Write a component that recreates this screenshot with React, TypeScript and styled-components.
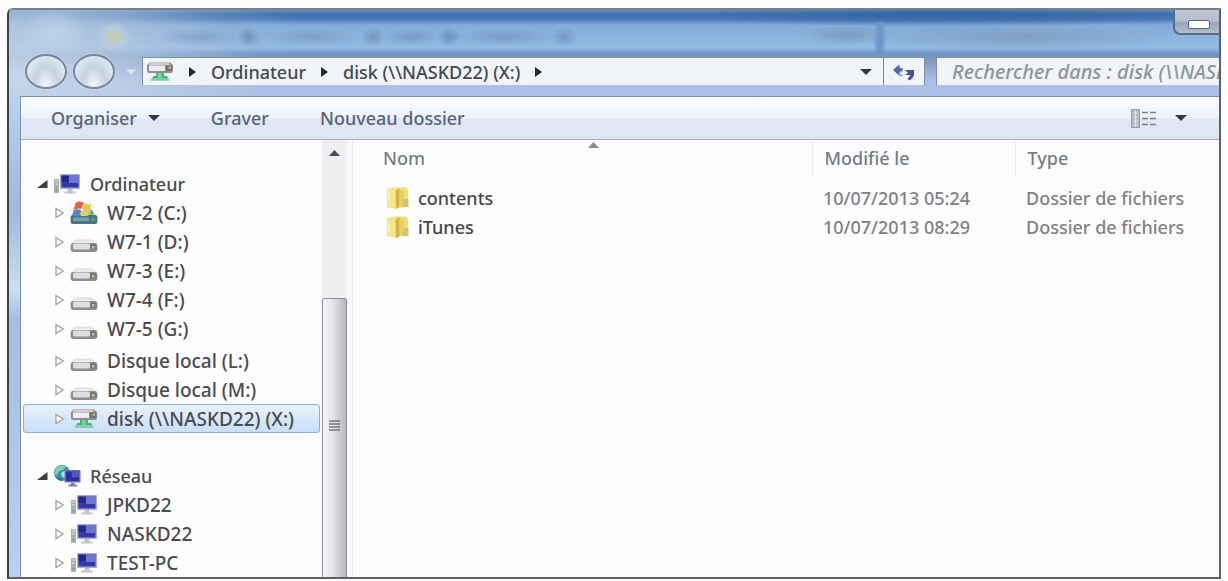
import React from "react";
import styled, { createGlobalStyle, css } from "styled-components";

const GlobalStyle = createGlobalStyle`
  * { box-sizing: border-box; }
  body {
    margin: 0;
    background: #fdfdfd;
    color: #4a4a50;
    font: 500 18px/28px "Noto Sans", "Open Sans", sans-serif;
  }
  button, input { font: inherit; color: inherit; }
`;

const Page = styled.div`
  display: flex;
  min-height: 100vh;
  padding: 8px 7px 2px;
`;

const Window = styled.div`
  flex: 1;
  min-width: 0;
  display: flex;
  flex-direction: column;
  overflow: hidden;
  border: 2px solid #5d6167;
  border-top-color: #74808e;
  border-left-color: #3d434e;
  border-top-left-radius: 6px;
  background: linear-gradient(#a5c1e2 0, #b7d2ec 90px, #9fb9da 200px, #c9dff0 280px, #a3bfe2 310px, #b6d2ee 100%);
`;

const Glass = styled.header`
  display: flex;
  flex-direction: column;
  background:
    radial-gradient(ellipse 18px 16px at 105px 27px, #c3cf9f 0, #b7cbe0 60%, transparent),
    radial-gradient(ellipse 34px 24px at 45px 22px, #bdd2ea 0, transparent),
    radial-gradient(ellipse 44px 9px at 190px 27px, #84a4ca 0, transparent),
    radial-gradient(ellipse 12px 10px at 240px 27px, #7291ba 0, transparent),
    radial-gradient(ellipse 50px 9px at 305px 27px, #7f9fc8 0, transparent),
    radial-gradient(ellipse 12px 10px at 364px 27px, #7693bd 0, transparent),
    radial-gradient(ellipse 30px 9px at 402px 27px, #799bc7 0, transparent),
    radial-gradient(ellipse 12px 10px at 440px 27px, #6e90c0 0, transparent),
    radial-gradient(ellipse 52px 9px at 496px 27px, #7b9cc8 0, transparent),
    radial-gradient(ellipse 14px 10px at 555px 27px, #7596c2 0, transparent),
    radial-gradient(ellipse 46px 10px at 838px 25px, #7c9cc0 0, transparent),
    linear-gradient(90deg, transparent 864px, #6c96c8 869px, #6c96c8 872px, transparent 878px) 0 12px / 100% 34px no-repeat,
    radial-gradient(ellipse 150px 14px at 1010px 27px, #809fc2 0, transparent),
    radial-gradient(ellipse 260px 12px at 940px 5px, #3564a4 0, transparent),
    radial-gradient(ellipse 260px 100px at 0 70px, #c6d6ea 0, transparent),
    radial-gradient(ellipse 300px 60px at 0 20px, #9bb5d5 0, transparent),
    linear-gradient(#6b8fbd 0, #3f6fac 4px, #4a79b5 9px, #83acd9 15px, #94bbe4 38px, #6f94c4 44px, #7f96ba 48px, #a9c0e4 70px, #adbfe7 100%);
`;

const TitleBar = styled.div`
  display: flex;
  justify-content: flex-end;
  align-items: flex-start;
  height: 44px;
`;

const MinimizeButton = styled.button`
  display: flex;
  align-items: center;
  justify-content: center;
  width: 46px;
  height: 25px;
  padding: 6px 0 0 4px;
  border: 2px solid #5b6b85;
  border-width: 0 0 2px 2px;
  border-bottom-left-radius: 7px;
  background: linear-gradient(#c3c9d3, #b4bccb 50%, #98a5ba 55%, #b4bfd0);
  &::before {
    content: "";
    width: 20px;
    height: 7px;
    border: 1px solid #5f6879;
    border-radius: 2px;
    background: #fff;
  }
`;

const NavBar = styled.div`
  display: flex;
  align-items: center;
  height: 35px;
  margin-bottom: 7px;
  padding-left: 16px;
`;

const RoundButton = styled.button`
  width: 42px;
  height: 35px;
  margin-right: 6px;
  padding: 0;
  border: 2px solid #78879c;
  border-radius: 50%;
  background: radial-gradient(ellipse at 50% 95%, #f1f6fb 0, #c6d3e2 45%, #e2ebf4 80%);
  box-shadow: 0 0 2px #dfe9f4;
`;

const HistoryButton = styled.button`
  display: flex;
  align-items: center;
  justify-content: center;
  width: 20px;
  height: 24px;
  margin-right: 1px;
  padding: 0;
  border: 0;
  background: none;
`;

const Field = styled.div`
  display: flex;
  align-items: stretch;
  height: 29px;
  border: 1px solid #7e8fa8;
  border-bottom-color: #b3c3da;
  background: #f1f5fa;
`;

const AddressField = styled(Field)`
  flex: 1;
  min-width: 0;
  padding-left: 3px;
`;

const Breadcrumb = styled.nav`
  flex: 1;
  min-width: 0;
  display: flex;
  align-items: center;
  gap: 15px;
  overflow: hidden;
  white-space: nowrap;
  > svg { flex: none; }
`;

const Crumb = styled.a`
  color: #45474e;
  text-decoration: none;
`;

const FieldButton = styled.button<{ $divided?: boolean }>`
  display: flex;
  align-items: center;
  justify-content: center;
  width: ${(p) => (p.$divided ? "41px" : "34px")};
  padding: 0;
  border: 0;
  border-left: ${(p) => (p.$divided ? "1px solid #74859d" : "0")};
  background: none;
`;

const SearchField = styled(Field)`
  width: 283px;
  margin-left: 11px;
  border-right: 0;
`;

const SearchInput = styled.input`
  width: 100%;
  min-width: 0;
  padding: 0 0 0 15px;
  border: 0;
  outline: 0;
  background: none;
  font-size: 20px;
  font-style: italic;
  &::placeholder { color: #8f939b; opacity: 1; }
`;

const Client = styled.div`
  flex: 1;
  display: flex;
  flex-direction: column;
  margin-left: 11px;
  border: 1px solid #7f8fa8;
  border-width: 1px 0 0 1px;
  background: #fdfdfd;
`;

const Toolbar = styled.div`
  display: flex;
  align-items: center;
  height: 43px;
  padding: 0 32px 0 30px;
  border-bottom: 1px solid #a3adbf;
  background: linear-gradient(#fafcff, #eef3fb 50%, #e1e8f5 52%, #dde6f5);
`;

const ToolButton = styled.button<{ $push?: boolean }>`
  display: flex;
  align-items: center;
  gap: ${(p) => (p.$push ? "18px" : "11px")};
  margin: 0 51px 0 ${(p) => (p.$push ? "auto" : "0")};
  padding: 0;
  border: 0;
  background: none;
  color: #5a6277;
  white-space: nowrap;
  &:last-child { margin-right: 0; }
`;

const Panes = styled.div`
  flex: 1;
  display: flex;
`;

const Sidebar = styled.aside`
  display: flex;
  width: 332px;
  flex: none;
  border-right: 1px solid #e3e9f2;
`;

const Tree = styled.nav`
  flex: 1;
  min-width: 0;
  padding: 29px 2px 0;
`;

const Group = styled.ul<{ $gap?: number }>`
  margin: ${(p) => p.$gap ?? 0}px 0 0;
  padding: 0;
  list-style: none;
`;

const Node = styled.a<{ $root?: boolean; $selected?: boolean }>`
  display: flex;
  align-items: center;
  gap: 5px;
  height: 29px;
  padding-left: ${(p) => (p.$root ? "13px" : "31px")};
  border: 1px solid transparent;
  border-radius: 3px;
  color: #4a4a50;
  font-size: ${(p) => (p.$root ? "18px" : "19px")};
  text-decoration: none;
  white-space: nowrap;
  ${(p) =>
    p.$selected &&
    css`
      border-color: #8fb0d4;
      background: linear-gradient(#e9f2fc, #c8dff7);
    `}
  span { margin-left: 4px; }
`;

const ScrollBar = styled.div`
  display: flex;
  flex-direction: column;
  width: 30px;
  padding-right: 5px;
  background: linear-gradient(90deg, #efeff1 0 24px, #f9f9fb 26px);
`;

const ScrollUp = styled.button`
  height: 24px;
  padding: 0;
  border: 0;
  background: none;
  line-height: 0;
`;

const ScrollGap = styled.div`
  flex: 134;
`;

const Thumb = styled.div`
  flex: 255;
  display: flex;
  align-items: center;
  justify-content: center;
  padding-bottom: 24px;
  border: 1px solid #8b8f98;
  border-bottom: 0;
  border-radius: 3px 3px 0 0;
  background: linear-gradient(90deg, #f6f6f7, #e6e6e9 40%, #c5c5cb 80%, #b7b7be);
`;

const Files = styled.main`
  flex: 1;
  min-width: 0;
  padding-left: 22px;
`;

const FileTable = styled.table`
  width: 100%;
  table-layout: fixed;
  border-collapse: collapse;
`;

const HeadCell = styled.th<{ $width?: number }>`
  position: relative;
  width: ${(p) => (p.$width ? `${p.$width}px` : "auto")};
  height: 36px;
  padding: 0 0 0 ${(p) => (p.$width ? "12px" : "8px")};
  border-left: ${(p) => (p.$width ? "1px solid #e9edf3" : "0")};
  color: #757b8a;
  font-weight: 500;
  text-align: left;
  > svg {
    position: absolute;
    top: 2px;
    left: 50%;
    margin-left: -5px;
  }
`;

const Spacer = styled.tbody`
  td { height: 7px; padding: 0; }
`;

const Cell = styled.td`
  height: 29px;
  padding: 0 0 0 11px;
  color: #808085;
  white-space: nowrap;
`;

const FileName = styled.a`
  display: flex;
  align-items: center;
  gap: 8px;
  color: #45454b;
  text-decoration: none;
`;

function Caret() {
  return (
    <svg width="12" height="6" viewBox="0 0 12 6" aria-hidden="true">
      <path d="M0 0h12L6 6z" fill="#333844" />
    </svg>
  );
}

function UpArrow({ color }: { color: string }) {
  return (
    <svg width="11" height="6" viewBox="0 0 11 6" aria-hidden="true">
      <path d="M0 6 5.500 0 11 6z" fill={color} />
    </svg>
  );
}

function CrumbArrow() {
  return (
    <svg width="7" height="10" viewBox="0 0 7 10" aria-hidden="true">
      <path d="M0 0 7 5 0 10z" fill="#25272d" />
    </svg>
  );
}

function Expander({ open }: { open?: boolean }) {
  return open ? (
    <svg width="11" height="10" viewBox="0 0 11 10" aria-hidden="true">
      <path d="M10.5 1v8H0z" fill="#3d3d42" />
    </svg>
  ) : (
    <svg width="10" height="12" viewBox="0 0 10 12" aria-hidden="true">
      <path d="M1 1.500 8.200 6 1 10.500z" fill="#fdfdfd" stroke="#a2a2a6" strokeWidth="1.300" />
    </svg>
  );
}

function DriveIcon() {
  return (
    <svg width="28" height="22" viewBox="0 0 28 22" aria-hidden="true">
      <path d="M5.500 9h16l5 4H1.500z" fill="#ececec" stroke="#d2d2d4" strokeWidth="0.800" />
      <rect x="0.600" y="12" width="26.800" height="9" rx="3" fill="#8e8e90" />
      <rect x="3" y="12.600" width="17" height="6" rx="1.500" fill="#dedee0" />
      <path d="M20 13h4.500q2 0 2 2v3.500H20z" fill="#777975" />
      <rect x="22" y="15" width="2.500" height="2.500" fill="#b6c9a5" />
    </svg>
  );
}

function NetDriveIcon() {
  return (
    <svg width="28" height="22" viewBox="0 0 28 22" aria-hidden="true">
      <path d="M1 4 4 1.500h20L27 4v6q0 2-2 2H3q-2 0-2-2z" fill="#918e91" />
      <path d="M3 4.500h16V10H3z" fill="#efecee" />
      <path d="M4.500 2h18l2 2h-22z" fill="#d6ccd0" />
      <path d="M20 4.500h6V10h-6z" fill="#73756e" />
      <path d="M22.500 5.500h2.500V8h-2.500z" fill="#a2c58c" />
      <path d="M10 11.500h8V15h3l2.500 4.500h-19L7.500 15H10z" fill="#48b579" />
      <path d="M12 12h3.500v5H12z" fill="#7fd0a0" />
      <path d="M2 18h24" stroke="#c4e2d0" strokeWidth="1" />
    </svg>
  );
}

function SystemDriveIcon() {
  return (
    <svg width="28" height="24" viewBox="0 0 28 24" aria-hidden="true">
      <path d="M6 10h16l5 6H1z" fill="#a9c3cc" />
      <rect x="0.600" y="14" width="26.800" height="9" rx="2" fill="#4c7487" />
      <path d="M3 16.500h16v3.500H3z" fill="#6fa3b1" />
      <path d="M21 17h4v3h-4z" fill="#5f9d62" />
      <path d="M5.500 2Q9 -0.500 13.500 1.500L11.500 8Q8 6.500 3.500 9z" fill="#df6444" />
      <path d="M14 2Q18 4.500 21.500 2.500L19.500 9.500Q16 11 12 8.500z" fill="#e8c63f" />
      <path d="M3.500 9.500Q7.500 7.500 11 9L9.500 15H2z" fill="#5185c5" />
      <path d="M12 9.500Q15.500 12 19 10.500L17.500 15h-7z" fill="#e6d25a" />
      <path d="M20.500 7 24 12l-4 3z" fill="#76ac55" />
    </svg>
  );
}

function ComputerIcon() {
  return (
    <svg width="28" height="22" viewBox="0 0 28 22" aria-hidden="true">
      <rect x="1" y="6" width="5" height="14" rx="1" fill="#a9afae" />
      <path d="M2 8h3M2 11h3" stroke="#e5e8e3" strokeWidth="1.200" />
      <rect x="2.500" y="16" width="2" height="2" fill="#7fb271" />
      <rect x="7" y="1" width="20" height="15" rx="1" fill="#a8acd0" />
      <rect x="8.500" y="2.500" width="17" height="12" fill="#3538a4" />
      <path d="M16 2.500h9.500V10H16z" fill="#6b76d2" />
      <path d="M8.500 2.500h7V9h-7z" fill="#25278b" />
      <path d="M14.500 16h5v2.500h3V20.500h-11v-2h3z" fill="#c3c5bf" />
    </svg>
  );
}

function NetworkIcon() {
  return (
    <svg width="28" height="24" viewBox="0 0 28 24" aria-hidden="true">
      <circle cx="9" cy="9" r="8" fill="#3f93a9" />
      <path d="M3 4.500Q7 0 13 2.500L10 6l-4 1-2 4-2.500-1z" fill="#86cfae" />
      <path d="M8 9l5-3 3 3-3 5-4-1z" fill="#aee0d6" />
      <path d="M4 13l4 1 1 3Q5 16.500 4 13z" fill="#2b6a93" />
      <rect x="11.500" y="6" width="16" height="12.500" rx="1" fill="#6a6fb5" />
      <rect x="13" y="7.500" width="13" height="9.500" fill="#2d2fa0" />
      <path d="M19 7.500h7v6h-7z" fill="#4f57c2" />
      <path d="M18 18.500h3.500v2H24V22.500h-8.500v-2H18z" fill="#7c7fae" />
    </svg>
  );
}

function FolderIcon() {
  return (
    <svg width="24" height="24" viewBox="0 0 24 24" aria-hidden="true">
      <path d="M1 3.500 9 1.500h10q3 .5 3 3V20l-3 1.500H1z" fill="#efdf78" />
      <path d="M1 3.500 7 1.500 11.500 3v18.500L9 23l-8-2.500z" fill="#f2e687" />
      <path d="M9.500 5l3-2.500 1 1V21l-3.500 2z" fill="#d4b143" />
      <path d="M13.500 5 18 3.500V19l-4.500 2z" fill="#ebd05f" />
      <path d="M18 13h4.500v8H16z" fill="#c5c87f" />
      <path d="M3 5v14" stroke="#faf4b8" strokeWidth="1.500" />
    </svg>
  );
}

function RefreshIcon() {
  return (
    <svg width="24" height="18" viewBox="0 0 24 18" aria-hidden="true">
      <path d="M1 7 7 1.500l1 3.500h2.500v3.500H8L7.500 13z" fill="#5768b4" />
      <path d="M8 9v4l3-1" stroke="#a5b0d8" strokeWidth="1.500" fill="none" />
      <path d="M13 7h9v4.500q-.5 4-5 6l-1.500-2q2.500-1.500 2.500-3.500H13l3-2z" fill="#484f9e" />
    </svg>
  );
}

function ViewIcon() {
  return (
    <svg width="26" height="19" viewBox="0 0 26 19" aria-hidden="true">
      <rect x="0.500" y="0.500" width="8" height="18" fill="#b4b9c3" stroke="#969ca9" />
      <path d="M2 4h5M2 8h5M2 12h5M2 16h5M4.500 1v17" stroke="#dfe3ea" />
      <path d="M11 3.500h6M19 3.500h6M11 9.500h6M19 9.500h6M11 15.500h6M19 15.500h6" stroke="#777d8b" strokeWidth="1.500" />
    </svg>
  );
}

function Grip() {
  return (
    <svg width="11" height="11" viewBox="0 0 11 11" aria-hidden="true">
      <path d="M0 1h11M0 4h11M0 7h11M0 10h11" stroke="#77777d" strokeWidth="1.400" />
    </svg>
  );
}

type Item = { name: string; icon: React.ReactNode; selected?: boolean };

const volumes: Item[] = [
  { name: "W7-2 (C:)", icon: <SystemDriveIcon /> },
  { name: "W7-1 (D:)", icon: <DriveIcon /> },
  { name: "W7-3 (E:)", icon: <DriveIcon /> },
  { name: "W7-4 (F:)", icon: <DriveIcon /> },
  { name: "W7-5 (G:)", icon: <DriveIcon /> },
];

const disks: Item[] = [
  { name: "Disque local (L:)", icon: <DriveIcon /> },
  { name: "Disque local (M:)", icon: <DriveIcon /> },
  { name: "disk (\\\\NASKD22) (X:)", icon: <NetDriveIcon />, selected: true },
];

const hosts: Item[] = ["JPKD22", "NASKD22", "TEST-PC"].map((name) => ({
  name,
  icon: <ComputerIcon />,
}));

const files = [
  { name: "contents", date: "10/07/2013 05:24", type: "Dossier de fichiers" },
  { name: "iTunes", date: "10/07/2013 08:29", type: "Dossier de fichiers" },
];

function Leaves({ items }: { items: Item[] }) {
  return (
    <>
      {items.map((item) => (
        <li key={item.name}>
          <Node href="#" $selected={item.selected}>
            <Expander />
            {item.icon}
            <span>{item.name}</span>
          </Node>
        </li>
      ))}
    </>
  );
}

function RootNode({ name, icon }: Item) {
  return (
    <li>
      <Node href="#" $root>
        <Expander open />
        {icon}
        <span>{name}</span>
      </Node>
    </li>
  );
}

export default function App() {
  return (
    <Page>
      <GlobalStyle />
      <Window>
        <Glass>
          <TitleBar>
            <MinimizeButton aria-label="Réduire" />
          </TitleBar>
          <NavBar>
            <RoundButton aria-label="Précédent" />
            <RoundButton aria-label="Suivant" />
            <HistoryButton aria-label="Historique">
              <svg width="10" height="6" viewBox="0 0 12 6" aria-hidden="true">
                <path d="M0 0h12L6 6z" fill="#dde7f3" />
              </svg>
            </HistoryButton>
            <AddressField>
              <Breadcrumb aria-label="Adresse">
                <NetDriveIcon />
                <CrumbArrow />
                <Crumb href="#">Ordinateur</Crumb>
                <CrumbArrow />
                <Crumb href="#">{"disk (\\\\NASKD22) (X:)"}</Crumb>
                <CrumbArrow />
              </Breadcrumb>
              <FieldButton aria-label="Adresses récentes">
                <Caret />
              </FieldButton>
              <FieldButton $divided aria-label="Actualiser">
                <RefreshIcon />
              </FieldButton>
            </AddressField>
            <SearchField>
              <SearchInput
                aria-label="Rechercher"
                placeholder={"Rechercher dans : disk (\\\\NASKD22) (X:)"}
              />
            </SearchField>
          </NavBar>
        </Glass>
        <Client>
          <Toolbar>
            <ToolButton>
              Organiser
              <Caret />
            </ToolButton>
            <ToolButton>Graver</ToolButton>
            <ToolButton>Nouveau dossier</ToolButton>
            <ToolButton $push aria-label="Changer l'affichage">
              <ViewIcon />
              <Caret />
            </ToolButton>
          </Toolbar>
          <Panes>
            <Sidebar>
              <Tree aria-label="Dossiers">
                <Group>
                  <RootNode name="Ordinateur" icon={<ComputerIcon />} />
                  <Leaves items={volumes} />
                </Group>
                <Group $gap={3}>
                  <Leaves items={disks} />
                </Group>
                <Group $gap={28}>
                  <RootNode name="Réseau" icon={<NetworkIcon />} />
                  <Leaves items={hosts} />
                </Group>
              </Tree>
              <ScrollBar>
                <ScrollUp aria-label="Défiler vers le haut">
                  <UpArrow color="#4a4c55" />
                </ScrollUp>
                <ScrollGap />
                <Thumb>
                  <Grip />
                </Thumb>
              </ScrollBar>
            </Sidebar>
            <Files>
              <FileTable>
                <thead>
                  <tr>
                    <HeadCell>
                      Nom
                      <UpArrow color="#878d9b" />
                    </HeadCell>
                    <HeadCell $width={203}>Modifié le</HeadCell>
                    <HeadCell $width={204}>Type</HeadCell>
                  </tr>
                </thead>
                <Spacer>
                  <tr>
                    <td colSpan={3} />
                  </tr>
                </Spacer>
                <tbody>
                  {files.map((file) => (
                    <tr key={file.name}>
                      <Cell>
                        <FileName href="#">
                          <FolderIcon />
                          {file.name}
                        </FileName>
                      </Cell>
                      <Cell>{file.date}</Cell>
                      <Cell>{file.type}</Cell>
                    </tr>
                  ))}
                </tbody>
              </FileTable>
            </Files>
          </Panes>
        </Client>
      </Window>
    </Page>
  );
}
